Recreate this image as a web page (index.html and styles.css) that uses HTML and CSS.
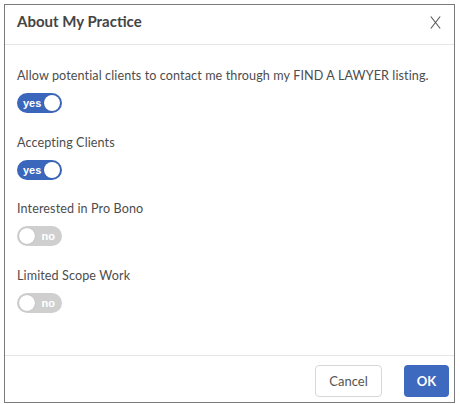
FILE: index.html
```html
<!DOCTYPE html>
<html>
<head>
<meta charset="utf-8">
<link rel="stylesheet" href="styles.css">
</head>
<body>
<div class="dialog">
  <div class="header">
    <h1 class="title">About My Practice</h1>
    <button class="close" aria-label="Close">
      <svg width="11" height="13" viewBox="0 0 11 13"><path d="M0.8 0.5L10.2 12.5M10.2 0.5L0.8 12.5" stroke="#555" stroke-width="1.1" fill="none"/></svg>
    </button>
  </div>
  <div class="body">
    <div class="field">
      <div class="label">Allow potential clients to contact me through my FIND A LAWYER listing.</div>
      <div class="toggle on"><span class="txt">yes</span><span class="knob"></span></div>
    </div>
    <div class="field">
      <div class="label">Accepting Clients</div>
      <div class="toggle on"><span class="txt">yes</span><span class="knob"></span></div>
    </div>
    <div class="field">
      <div class="label">Interested in Pro Bono</div>
      <div class="toggle off"><span class="knob"></span><span class="txt">no</span></div>
    </div>
    <div class="field">
      <div class="label">Limited Scope Work</div>
      <div class="toggle off"><span class="knob"></span><span class="txt">no</span></div>
    </div>
  </div>
  <div class="footer">
    <button class="btn cancel">Cancel</button>
    <button class="btn ok">OK</button>
  </div>
</div>
</body>
</html>
```
FILE: styles.css
```css
html, body { margin: 0; padding: 0; background: #fff; }
body { padding: 4px; font-family: Lato, "Noto Sans", sans-serif; color: #4a4a4a; }
.dialog {
  width: 451px;
  height: 399px;
  border: 1.5px solid #7a7a7a;
  box-sizing: border-box;
  display: flex;
  flex-direction: column;
  background: #fff;
}
.header {
  height: 40px;
  flex: none;
  border-bottom: 1px solid #e6e6e6;
  display: flex;
  align-items: center;
  justify-content: space-between;
  padding: 0 12px 0 12px;
  box-sizing: border-box;
}
.title { margin: 0; font-size: 15px; font-weight: 700; color: #444; padding-bottom: 7px; }
.close { border: 0; background: none; padding: 0; margin-right: 1px; margin-bottom: 5px; display: flex; }
.body { flex: 1; padding: 22px 12px 0 12px; }
.field { margin-bottom: 20.5px; }
.label { font-size: 12.6px; color: #4d4d4d; height: 18px; line-height: 18px; margin-bottom: 8px; letter-spacing: 0.1px; }
.toggle {
  width: 45px; height: 20px; border-radius: 10px; box-sizing: border-box;
  display: flex; align-items: center; justify-content: space-between;
  font-family: "Liberation Sans", Arial, sans-serif; font-size: 11px; font-weight: 700;
}
.toggle.on { background: #3a66bb; padding: 0 2px 0 6px; color: #fff; }
.toggle.off { background: #cfcfcf; padding: 0 7px 0 2px; color: #fff; }
.knob { width: 16px; height: 16px; border-radius: 50%; background: #fff; box-shadow: 0 0 1px rgba(0,0,0,0.3); }
.footer {
  height: 47px;
  flex: none;
  box-sizing: border-box;
  border-top: 1px solid #e6e6e6;
  display: flex;
  justify-content: flex-end;
  align-items: flex-start;
  gap: 22px;
  padding: 9px 5px 0 0;
}
.btn { height: 32px; border-radius: 4px; font-family: Lato, "Noto Sans", sans-serif; font-size: 13px; cursor: pointer; }
.cancel { width: 67px; background: #fff; border: 1px solid #d8d8d8; color: #555; }
.ok { width: 45px; background: #3d69bf; border: 0; color: #fff; font-weight: 700; }
```
